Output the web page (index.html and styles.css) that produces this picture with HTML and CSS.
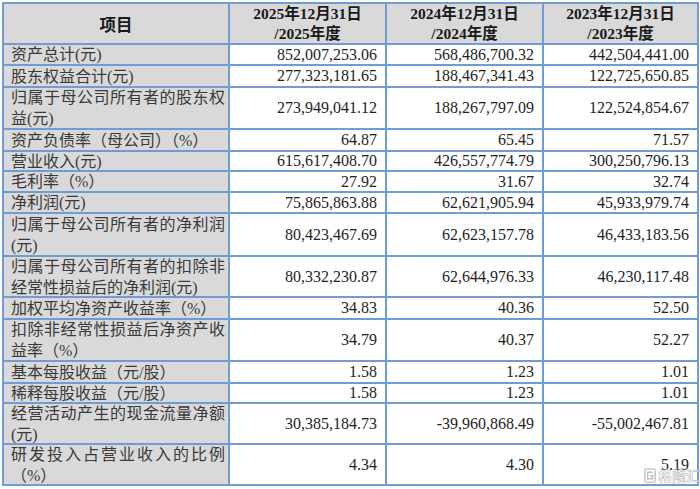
FILE: index.html
```html
<!DOCTYPE html>
<html lang="zh-CN">
<head>
<meta charset="utf-8">
<title>主要财务数据</title>
<link rel="stylesheet" href="styles.css">
</head>
<body>
<div class="page">
  <div class="sheet" role="table">
    <div class="cell head head-item"><span>项目</span></div>
    <div class="cell head"><span>2025年12月31日<br>/2025年度</span></div>
    <div class="cell head"><span>2024年12月31日<br>/2024年度</span></div>
    <div class="cell head"><span>2023年12月31日<br>/2023年度</span></div>

    <div class="cell label"><span class="lbl">资产总计(元)</span></div>
    <div class="cell num">852,007,253.06</div>
    <div class="cell num">568,486,700.32</div>
    <div class="cell num">442,504,441.00</div>

    <div class="cell label"><span class="lbl">股东权益合计(元)</span></div>
    <div class="cell num">277,323,181.65</div>
    <div class="cell num">188,467,341.43</div>
    <div class="cell num">122,725,650.85</div>

    <div class="cell label"><span class="lbl">归属于母公司所有者的股东权益(元)</span></div>
    <div class="cell num">273,949,041.12</div>
    <div class="cell num">188,267,797.09</div>
    <div class="cell num">122,524,854.67</div>

    <div class="cell label"><span class="lbl">资产负债率（母公司）（%）</span></div>
    <div class="cell num">64.87</div>
    <div class="cell num">65.45</div>
    <div class="cell num">71.57</div>

    <div class="cell label"><span class="lbl">营业收入(元)</span></div>
    <div class="cell num">615,617,408.70</div>
    <div class="cell num">426,557,774.79</div>
    <div class="cell num">300,250,796.13</div>

    <div class="cell label"><span class="lbl">毛利率（%）</span></div>
    <div class="cell num">27.92</div>
    <div class="cell num">31.67</div>
    <div class="cell num">32.74</div>

    <div class="cell label"><span class="lbl">净利润(元)</span></div>
    <div class="cell num">75,865,863.88</div>
    <div class="cell num">62,621,905.94</div>
    <div class="cell num">45,933,979.74</div>

    <div class="cell label"><span class="lbl">归属于母公司所有者的净利润(元)</span></div>
    <div class="cell num">80,423,467.69</div>
    <div class="cell num">62,623,157.78</div>
    <div class="cell num">46,433,183.56</div>

    <div class="cell label"><span class="lbl">归属于母公司所有者的扣除非经常性损益后的净利润(元)</span></div>
    <div class="cell num">80,332,230.87</div>
    <div class="cell num">62,644,976.33</div>
    <div class="cell num">46,230,117.48</div>

    <div class="cell label"><span class="lbl">加权平均净资产收益率（%）</span></div>
    <div class="cell num">34.83</div>
    <div class="cell num">40.36</div>
    <div class="cell num">52.50</div>

    <div class="cell label"><span class="lbl">扣除非经常性损益后净资产收益率（%）</span></div>
    <div class="cell num">34.79</div>
    <div class="cell num">40.37</div>
    <div class="cell num">52.27</div>

    <div class="cell label"><span class="lbl">基本每股收益（元/股）</span></div>
    <div class="cell num">1.58</div>
    <div class="cell num">1.23</div>
    <div class="cell num">1.01</div>

    <div class="cell label"><span class="lbl">稀释每股收益（元/股）</span></div>
    <div class="cell num">1.58</div>
    <div class="cell num">1.23</div>
    <div class="cell num">1.01</div>

    <div class="cell label"><span class="lbl">经营活动产生的现金流量净额(元)</span></div>
    <div class="cell num">30,385,184.73</div>
    <div class="cell num">-39,960,868.49</div>
    <div class="cell num">-55,002,467.81</div>

    <div class="cell label"><span class="lbl">研发投入占营业收入的比例（%）</span></div>
    <div class="cell num">4.34</div>
    <div class="cell num">4.30</div>
    <div class="cell num">5.19</div>
  </div>

  <div class="watermark" aria-hidden="true">
    <svg class="wm-icon" width="12" height="15" viewBox="0 0 12 15">
      <rect x="0.8" y="0.8" width="10.4" height="13.4" rx="1.6" fill="none" stroke="#bdbdbd" stroke-width="1.3"/>
      <path d="M8.6 4.2 H3.6 V10.8 H8.6 V7.6 H6.2" fill="none" stroke="#bdbdbd" stroke-width="1.4"/>
    </svg>
    <span class="wm-text">格隆汇</span>
  </div>
</div>
</body>
</html>
```

FILE: styles.css
```css
* { box-sizing: border-box; }

html, body {
  margin: 0;
  padding: 0;
  background: #ffffff;
}

.page {
  position: relative;
  width: 700px;
  height: 489px;
  padding: 2px 0 0 2px;
}

.sheet {
  display: grid;
  width: 697px;
  grid-template-columns: 226px 157px 157px 155px;
  grid-template-rows: 41px 21px 22px 42px 22px 20px 21px 21px 43px 41px 22px 42px 22px 20px 41px 41px;
  border-left: 2px solid #6f9bd6;
  border-top: 2px solid #6f9bd6;
}

.cell {
  display: flex;
  align-items: center;
  border-right: 2px solid #6f9bd6;
  border-bottom: 2px solid #6f9bd6;
  overflow: visible;
  min-width: 0;
}

.head {
  background: #d9d9d9;
  justify-content: center;
  text-align: center;
  font-family: "Liberation Serif", "Noto Sans CJK SC", serif;
  font-weight: 700;
  font-size: 15.5px;
  line-height: 20px;
  color: #1a1a1a;
}

.head-item {
  font-family: "Noto Sans CJK SC", sans-serif;
  font-size: 16.5px;
  padding-top: 1px;
}

.label {
  background: #d9d9d9;
  padding: 0 3px 0 7px;
  font-family: "Liberation Serif", "Noto Sans CJK SC", serif;
  font-size: 16px;
  line-height: 21px;
  color: #3a3a3a;
}

.lbl {
  display: block;
  flex: 1;
  text-align: justify;
}

.num {
  justify-content: flex-end;
  padding-right: 8px;
  font-family: "Liberation Serif", serif;
  font-size: 16px;
  line-height: 20px;
  color: #1e1e1e;
}

.watermark {
  position: absolute;
  left: 644px;
  top: 467px;
  display: flex;
  align-items: center;
  gap: 2px;
}

.wm-icon {
  display: block;
}

.wm-text {
  font-family: "Noto Sans CJK SC", sans-serif;
  font-size: 14px;
  line-height: 16px;
  font-weight: 700;
  color: rgba(255, 255, 255, 0.55);
  -webkit-text-stroke: 0.6px #bdbdbd;
}
```
